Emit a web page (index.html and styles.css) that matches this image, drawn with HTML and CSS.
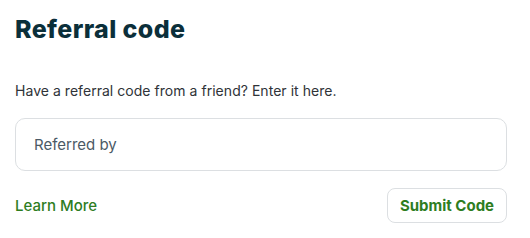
FILE: index.html
```html
<!DOCTYPE html>
<html>
<head>
<meta charset="utf-8">
<link rel="stylesheet" href="styles.css">
</head>
<body>
<div class="card">
  <h1 class="title">Referral code</h1>
  <p class="desc">Have a referral code from a friend? Enter it here.</p>
  <input class="field" type="text" placeholder="Referred by">
  <div class="actions">
    <a class="learn" href="#">Learn More</a>
    <button class="submit" type="button">Submit Code</button>
  </div>
</div>
</body>
</html>
```
FILE: styles.css
```css
html, body {
  margin: 0;
  padding: 0;
  background: #ffffff;
}
body {
  font-family: Inter, "Noto Sans", sans-serif;
}
.card {
  width: 492px;
  padding: 13px 0 0 15px;
}
.title {
  margin: 0;
  font-size: 25px;
  line-height: 32px;
  font-weight: 800;
  color: #0b2f3a;
  letter-spacing: 0.4px;
}
.desc {
  margin: 36px 0 0 0;
  font-size: 14px;
  line-height: 20px;
  color: #2f3338;
  letter-spacing: 0.04px;
}
.field {
  display: block;
  box-sizing: border-box;
  width: 492px;
  height: 53px;
  margin-top: 17px;
  padding: 0 18px;
  border: 1px solid #dcdfe2;
  border-radius: 10px;
  font-family: inherit;
  font-size: 15px;
  color: #2f3338;
  outline: none;
}
.field::placeholder {
  color: #4b5a66;
}
.actions {
  display: flex;
  justify-content: space-between;
  align-items: center;
  margin-top: 17px;
}
.learn {
  font-size: 15px;
  font-weight: 500;
  color: #2e7d1f;
  text-decoration: none;
}
.submit {
  box-sizing: border-box;
  width: 120px;
  height: 35px;
  border: 1px solid #dcdfe2;
  border-radius: 8px;
  background: #ffffff;
  font-family: inherit;
  font-size: 15px;
  font-weight: 700;
  color: #2e7d1f;
  padding: 0;
}
```
